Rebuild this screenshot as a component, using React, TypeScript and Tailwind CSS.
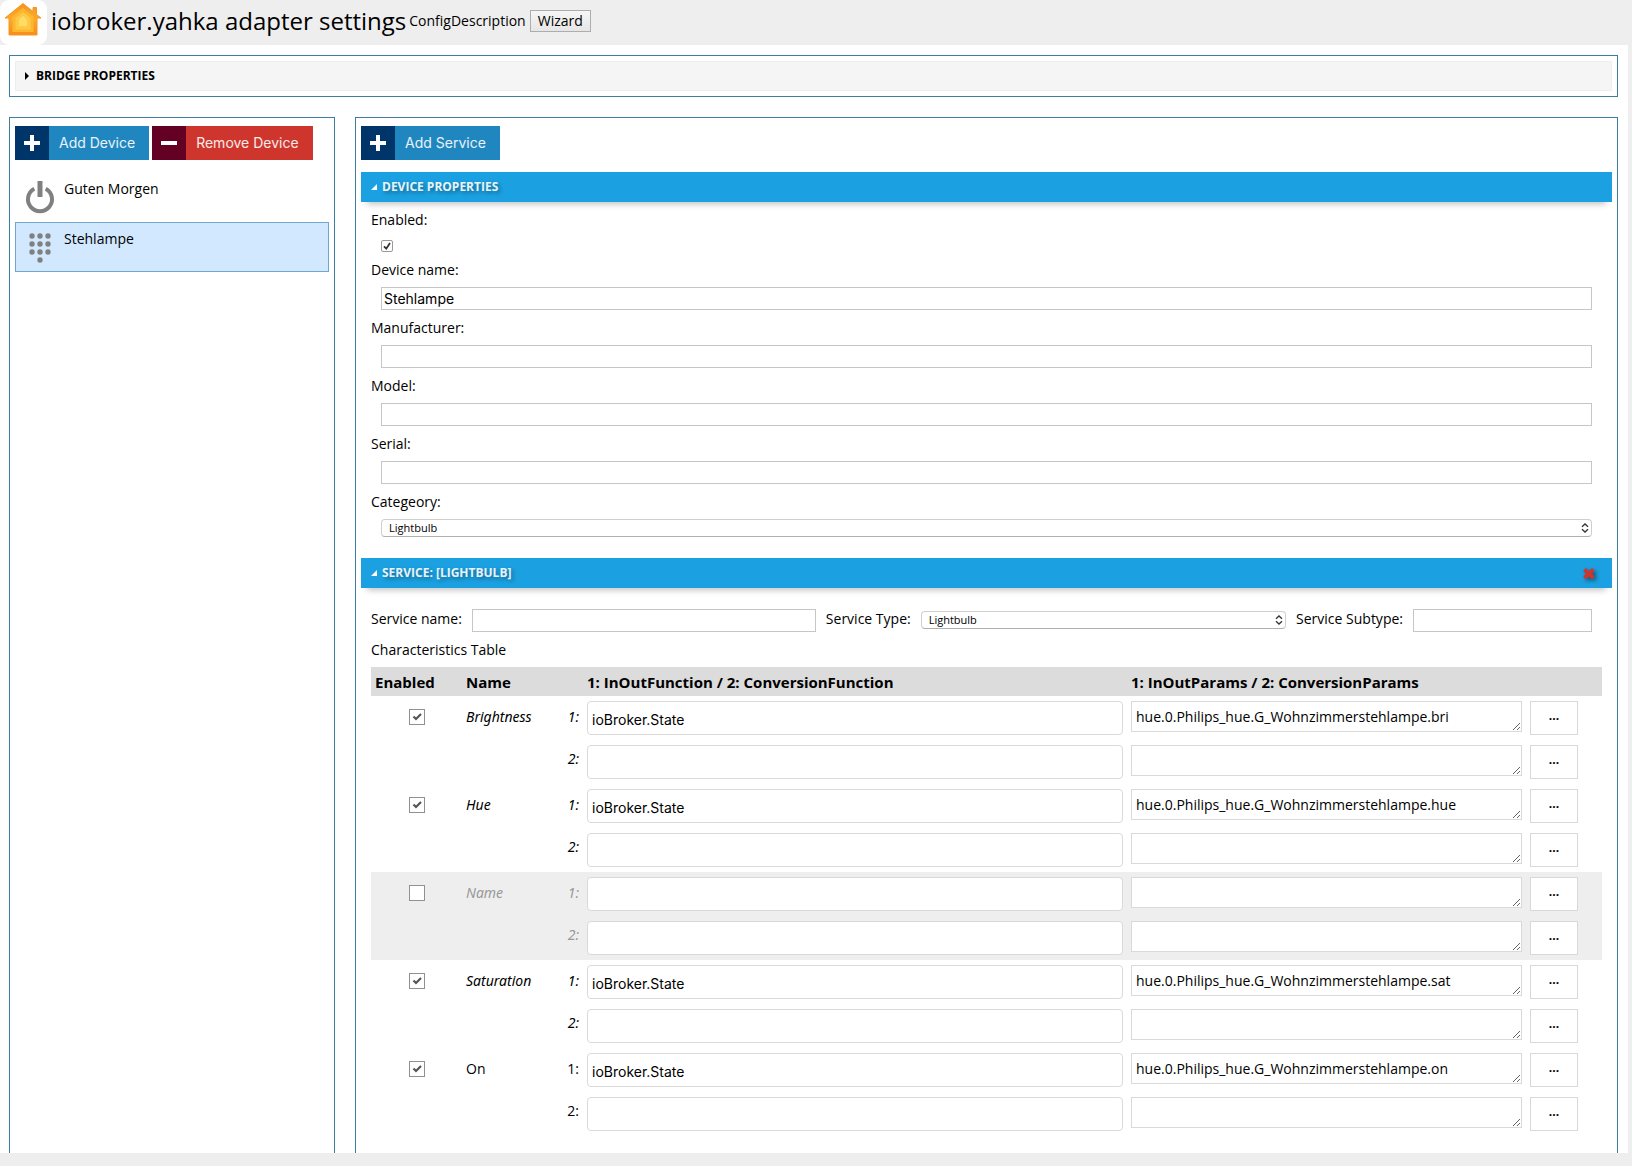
import { useState } from 'react';
import type { ReactNode } from 'react';
import { clsx } from 'clsx';

type Characteristic = {
  name: string;
  enabled: boolean;
  optional: boolean;
  inOutFunction: string;
  inOutParams: string;
};

const CHARACTERISTICS: Characteristic[] = [
  { name: 'Brightness', enabled: true, optional: true, inOutFunction: 'ioBroker.State', inOutParams: 'hue.0.Philips_hue.G_Wohnzimmerstehlampe.bri' },
  { name: 'Hue', enabled: true, optional: true, inOutFunction: 'ioBroker.State', inOutParams: 'hue.0.Philips_hue.G_Wohnzimmerstehlampe.hue' },
  { name: 'Name', enabled: false, optional: true, inOutFunction: '', inOutParams: '' },
  { name: 'Saturation', enabled: true, optional: true, inOutFunction: 'ioBroker.State', inOutParams: 'hue.0.Philips_hue.G_Wohnzimmerstehlampe.sat' },
  { name: 'On', enabled: true, optional: false, inOutFunction: 'ioBroker.State', inOutParams: 'hue.0.Philips_hue.G_Wohnzimmerstehlampe.on' },
];

const DEVICE_FIELDS = [
  { id: 'name', label: 'Device name:', value: 'Stehlampe' },
  { id: 'manufacturer', label: 'Manufacturer:', value: '' },
  { id: 'model', label: 'Model:', value: '' },
  { id: 'serial', label: 'Serial:', value: '' },
];

function HouseLogo() {
  return (
    <svg viewBox="0 0 47 45" className="h-[45px] w-[47px] shrink-0" aria-hidden="true">
      <defs>
        <linearGradient id="house" x1="0" y1="0" x2="0" y2="1">
          <stop offset="0" stopColor="#f7941f" />
          <stop offset="0.5" stopColor="#fbab2a" />
          <stop offset="1" stopColor="#f68b1c" />
        </linearGradient>
      </defs>
      <rect width="47" height="45" rx="9" fill="#fff" />
      <path
        d="M23 3.500 L33 11.500 V7.500 H36.500 V14.500 L41 18 H37 V35 H9 V18 H5 Z"
        fill="url(#house)"
        stroke="#f7961e"
        strokeWidth="1"
        strokeLinejoin="round"
      />
      <path d="M23 8 L33.500 16.500 V32 H12.500 V16.500 Z" fill="#fdb62f" />
      <path d="M23 12 L30.500 18 V29.500 H15.500 V18 Z" fill="#fec944" />
      <path d="M23 16 L27 19.500 V26 H19 V19.500 Z" fill="#ffdc66" />
    </svg>
  );
}

function PowerIcon() {
  return (
    <svg viewBox="0 0 48 48" className="size-12 shrink-0" aria-hidden="true">
      <path d="M18.300 15.700 A12 12 0 1 0 29.700 15.700" fill="none" stroke="#808080" strokeWidth="4" />
      <path d="M24 8 V24" stroke="#808080" strokeWidth="5" />
    </svg>
  );
}

function KeypadIcon() {
  const dots = [[16, 13], [24, 13], [32, 13], [16, 21], [24, 21], [32, 21], [16, 29], [24, 29], [32, 29], [24, 37]];
  return (
    <svg viewBox="0 0 48 48" className="size-12 shrink-0" aria-hidden="true">
      {dots.map(([x, y]) => (
        <circle key={`${x}-${y}`} cx={x} cy={y} r="2.700" fill="#808080" />
      ))}
    </svg>
  );
}

function ImageButton({ label, kind = 'add' }: { label: string; kind?: 'add' | 'remove' }) {
  const remove = kind === 'remove';
  return (
    <button
      type="button"
      className={clsx("flex h-[34px] items-center font-['Inter',sans-serif] text-sm text-white/90", remove ? 'bg-[#ce352c]' : 'bg-[#2086bf]')}
    >
      <span className={clsx('flex size-[34px] items-center justify-center', remove ? 'bg-[#640024]' : 'bg-[#00356a]')}>
        <svg viewBox="0 0 16 16" className="size-4" aria-hidden="true">
          <path d={remove ? 'M0 8 H16' : 'M0 8 H16 M8 0 V16'} stroke="#fff" strokeWidth="4" />
        </svg>
      </span>
      <span className="pr-3.5 pl-2.5">{label}</span>
    </button>
  );
}

function PanelHeading({ title, onClose }: { title: string; onClose?: boolean }) {
  return (
    <div className="flex h-[30px] items-center bg-[#1ba1e2] pr-4 pl-2.5 text-white/90 shadow-[0_8px_6px_-6px_rgba(0,0,0,0.25)]">
      <svg viewBox="0 0 6 6" className="size-1.5" aria-hidden="true">
        <path d="M6 0 V6 H0 Z" fill="#fff" />
      </svg>
      <h2 className="ml-[5px] flex-1 text-xs font-bold uppercase [text-shadow:2px_2px_4px_rgba(0,0,0,0.4)]">{title}</h2>
      {onClose && (
        <button type="button" aria-label="Remove service">
          <svg viewBox="0 0 14 14" className="size-3.5 drop-shadow-[2px_2px_2px_rgba(0,0,0,0.5)]" aria-hidden="true">
            <path d="M2.500 3.500 L11.500 12 M11.500 3.500 L2.500 12" stroke="#ce352c" strokeWidth="4" />
          </svg>
        </button>
      )}
    </div>
  );
}

function Select({ id, className }: { id: string; className?: string }) {
  return (
    <div className={clsx('relative h-[18px]', className)}>
      <select
        id={id}
        defaultValue="Lightbulb"
        className="block h-[18px] w-full appearance-none rounded border border-[#cfcfcf] border-b-[#b0b0b0] bg-white pl-[7px] text-[11px] leading-4"
      >
        <option>Lightbulb</option>
      </select>
      <svg viewBox="0 0 8 10" className="pointer-events-none absolute top-1 right-[3px] h-2.5 w-2" fill="none" stroke="#333" strokeWidth="1.300" aria-hidden="true">
        <path d="M1 3.700 L4 0.900 L7 3.700 M1 6.300 L4 9.100 L7 6.300" />
      </svg>
    </div>
  );
}

function CheckBox({ id, label, checked, small }: { id?: string; label?: string; checked: boolean; small?: boolean }) {
  return (
    <span className={clsx('inline-grid *:[grid-area:1/1]', small ? 'size-3' : 'size-4')}>
      <input
        id={id}
        type="checkbox"
        aria-label={label}
        defaultChecked={checked}
        className={clsx('peer size-full appearance-none border bg-white', small ? 'rounded-xs border-[#999]' : 'border-[#919191]')}
      />
      <svg viewBox="0 0 16 16" className="pointer-events-none hidden size-full peer-checked:block" fill="none" aria-hidden="true">
        {small ? (
          <path d="M4 8.500 L7 11.500 L12 4" stroke="#333" strokeWidth="2.400" />
        ) : (
          <path d="M4.500 7.500 L7 10 L12 5" stroke="#555" strokeWidth="2.200" />
        )}
      </svg>
    </span>
  );
}

function TextBox({ id, value = '', className }: { id: string; value?: string; className?: string }) {
  return (
    <input
      id={id}
      type="text"
      defaultValue={value}
      className={clsx("h-[23px] border border-[#c6c6c6] bg-white px-0.5 font-['Inter',sans-serif] text-sm", className)}
    />
  );
}

function DeviceItem({ icon, name, selected, onSelect }: { icon: ReactNode; name: string; selected: boolean; onSelect: () => void }) {
  return (
    <li>
      <button
        type="button"
        onClick={onSelect}
        className={clsx('flex h-[50px] w-full items-start border text-left', selected ? 'border-[#6fa8cc] bg-[#d1e8ff]' : 'border-transparent')}
      >
        {icon}
        <span className="pt-1.5 leading-5">{name}</span>
      </button>
    </li>
  );
}

function CharacteristicRows({ item }: { item: Characteristic }) {
  return (
    <tbody className={clsx(!item.enabled && 'bg-[#eee]')}>
      {[1, 2].map((line) => (
        <tr key={line} className={clsx('h-11 align-top', item.optional && "font-['Noto_Sans',sans-serif] italic", !item.enabled && 'text-[#999]')}>
          <td className="pt-[13px] text-center leading-none">
            {line === 1 && <CheckBox checked={item.enabled} label={`Enable ${item.name}`} />}
          </td>
          <td className="px-1 pt-[11px]">{line === 1 && item.name}</td>
          <td className={clsx('px-1 text-right', line === 1 ? 'pt-[11px]' : 'pt-[9px]')}>{line}:</td>
          <td className="px-1 pt-[5px]">
            <input
              type="text"
              aria-label={`${item.name} function ${line}`}
              defaultValue={line === 1 ? item.inOutFunction : ''}
              className="block h-[34px] w-full rounded border border-[#d9d9d9] bg-white px-1 pt-0.5 font-['Inter',sans-serif] text-sm text-black not-italic"
            />
          </td>
          <td className="px-1 pt-[5px] font-['Open_Sans',sans-serif]">
            <textarea
              rows={1}
              aria-label={`${item.name} params ${line}`}
              defaultValue={line === 1 ? item.inOutParams : ''}
              className="block h-[31px] w-full resize overflow-hidden border border-[#d9d9d9] bg-white px-1 pt-[5px] text-black not-italic"
            />
          </td>
          <td className="px-1 pt-[5px] font-['Open_Sans',sans-serif]">
            <button
              type="button"
              aria-label={`Edit ${item.name} ${line}`}
              className="flex h-[34px] w-12 items-center justify-center border border-[#d9d9d9] bg-white pb-1 text-xs font-bold text-black not-italic"
            >
              ...
            </button>
          </td>
        </tr>
      ))}
    </tbody>
  );
}

export default function App() {
  const [selected, setSelected] = useState('Stehlampe');

  return (
    <div className="flex h-screen flex-col overflow-hidden bg-[#eee] pr-1 pb-[13px] font-['Open_Sans','Noto_Sans',sans-serif] text-sm leading-5 text-black">
      <header className="flex h-[45px] shrink-0 items-center">
        <HouseLogo />
        <div className="flex items-center gap-[3px] pb-1">
          <h1 className="ml-1 text-2xl">iobroker.yahka adapter settings</h1>
          <span>ConfigDescription</span>
          <button type="button" className="ml-px h-[22px] border border-[#adadad] bg-linear-to-b from-[#f6f6f6] to-[#e6e6e6] px-[7px] leading-5">
            Wizard
          </button>
        </div>
      </header>

      <main className="flex min-h-0 flex-1 flex-col gap-5 bg-white pt-2.5 pr-2.5 pl-[9px]">
        <section className="shrink-0 border border-[#3b7ea1] p-[5px]">
          <button type="button" className="flex h-[30px] w-full items-center border border-[#eee] bg-[#f5f5f5] pl-[9px]">
            <svg viewBox="0 0 4 8" className="h-2 w-1" aria-hidden="true">
              <path d="M0 0 L4 4 L0 8 Z" />
            </svg>
            <span className="ml-[7px] text-xs font-bold uppercase">Bridge Properties</span>
          </button>
        </section>

        <div className="flex min-h-0 flex-1 gap-5">
          <aside className="w-[326px] shrink-0 border border-b-0 border-[#3b7ea1] px-[5px] pt-2">
            <div className="flex gap-[3px]">
              <ImageButton label="Add Device" />
              <ImageButton label="Remove Device" kind="remove" />
            </div>
            <ul className="mt-3">
              <DeviceItem icon={<PowerIcon />} name="Guten Morgen" selected={selected === 'Guten Morgen'} onSelect={() => setSelected('Guten Morgen')} />
              <DeviceItem icon={<KeypadIcon />} name="Stehlampe" selected={selected === 'Stehlampe'} onSelect={() => setSelected('Stehlampe')} />
            </ul>
          </aside>

          <div className="min-w-0 flex-1 overflow-hidden border border-b-0 border-[#3b7ea1] px-[5px] pt-2">
            <ImageButton label="Add Service" />

            <section className="mt-3">
              <PanelHeading title="Device Properties" />
              <div className="flex flex-col gap-2 pt-2 pr-5 pb-[21px] pl-2.5">
                <div className="flex flex-col items-start gap-2.5">
                  <label htmlFor="enabled">Enabled:</label>
                  <div className="ml-2.5 flex">
                    <CheckBox id="enabled" checked small />
                  </div>
                </div>
                {DEVICE_FIELDS.map((field) => (
                  <div key={field.id} className="flex flex-col gap-[7px]">
                    <label htmlFor={field.id}>{field.label}</label>
                    <TextBox id={field.id} value={field.value} className="ml-2.5" />
                  </div>
                ))}
                <div className="flex flex-col gap-[7px]">
                  <label htmlFor="category">Categeory:</label>
                  <Select id="category" className="ml-2.5" />
                </div>
              </div>
            </section>

            <section>
              <PanelHeading title="Service: [Lightbulb]" onClose />
              <div className="pt-[21px] pr-2.5 pl-2.5">
                <div className="flex h-[23px] items-start gap-2.5 pr-2.5">
                  <label htmlFor="service-name">Service name:</label>
                  <TextBox id="service-name" className="w-[344px]" />
                  <label htmlFor="service-type">Service Type:</label>
                  <Select id="service-type" className="mt-0.5 min-w-0 flex-1" />
                  <label htmlFor="service-subtype">Service Subtype:</label>
                  <TextBox id="service-subtype" className="w-[179px]" />
                </div>

                <table className="mt-2 w-full table-fixed text-left">
                  <caption className="pb-[7px] text-left">Characteristics Table</caption>
                  <colgroup>
                    <col className="w-[91px]" />
                    <col className="w-[86px]" />
                    <col className="w-[35px]" />
                    <col />
                    <col className="w-[399px]" />
                    <col className="w-[76px]" />
                  </colgroup>
                  <thead>
                    <tr className="h-[29px] bg-[#dcdcdc] text-[15px] [&>th]:px-1 [&>th]:font-bold">
                      <th>Enabled</th>
                      <th colSpan={2}>Name</th>
                      <th>1: InOutFunction / 2: ConversionFunction</th>
                      <th colSpan={2}>1: InOutParams / 2: ConversionParams</th>
                    </tr>
                  </thead>
                  {CHARACTERISTICS.map((item) => (
                    <CharacteristicRows key={item.name} item={item} />
                  ))}
                </table>
              </div>
            </section>
          </div>
        </div>
      </main>
    </div>
  );
}
